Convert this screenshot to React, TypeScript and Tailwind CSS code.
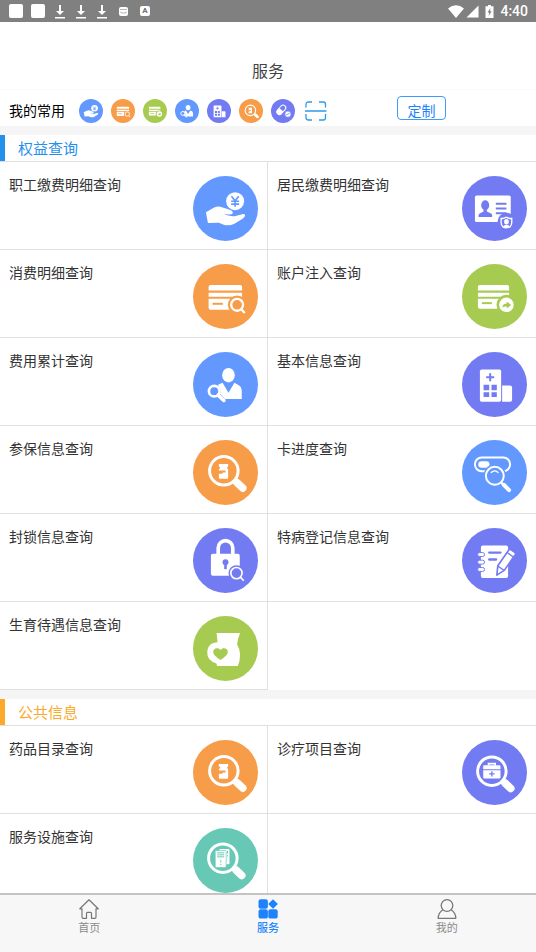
import type { ReactNode } from "react";

// ─── Types ────────────────────────────────────────────────────────────────────

type IconName =
  | "hand"
  | "cardSearch"
  | "cardShare"
  | "idCard"
  | "person"
  | "building"
  | "bottle"
  | "toggle"
  | "lock"
  | "notebook"
  | "belly"
  | "kit"
  | "files"
  | "pills";

interface ServiceItem {
  label: string;
  icon: IconName;
}

// ─── Glyphs ───────────────────────────────────────────────────────────────────

const BLUE = "#6399ff";
const ORANGE = "#f79c48";
const GREEN = "#a7cb50";
const PURPLE = "#737bf2";
const TEAL = "#67c9b5";

function Lens({ cx, cy }: { cx: number; cy: number }) {
  return (
    <g fill="none" stroke="#fff">
      <circle cx={cx} cy={cy} r="43" strokeWidth="9" />
      <path d={`M${cx + 32} ${cy + 31}l7 6`} strokeWidth="14" />
      <path
        d={`M${cx + 40} ${cy + 36}l17 16`}
        strokeWidth="23"
        strokeLinecap="round"
      />
    </g>
  );
}

const ICONS: Record<IconName, { color: string; glyph: ReactNode }> = {
  hand: {
    color: BLUE,
    glyph: (
      <>
        <circle cx="127" cy="76" r="27" />
        <path
          d="M116 61l11 14l11-14M127 75v18M115 76h24M115 85h24"
          fill="none"
          stroke={BLUE}
          strokeWidth="5"
        />
        <path d="M39 109L64 95Q76 89 87 94L111 102Q123 107 119 114Q115 118 92 114Q110 123 126 121L148 115Q160 114 156 122Q153 128 141 134L125 144Q107 152 91 146L78 141L45 142Z" />
      </>
    ),
  },
  cardSearch: {
    color: ORANGE,
    glyph: (
      <>
        <path d="M53 63h89a6 6 0 0 1 6 6v11H47V69a6 6 0 0 1 6-6zM47 87h101v12H47zM47 105h101v27a6 6 0 0 1-6 6H53a6 6 0 0 1-6-6z" />
        <path d="M59 120h31" stroke={ORANGE} strokeWidth="6" />
        <circle cx="133" cy="123" r="28" fill={ORANGE} />
        <path d="M146 136l13 13" stroke={ORANGE} strokeWidth="16" />
        <circle cx="133" cy="123" r="18" fill="none" stroke="#fff" strokeWidth="7" />
        <path d="M145 136l11 12" stroke="#fff" strokeWidth="7" />
      </>
    ),
  },
  cardShare: {
    color: GREEN,
    glyph: (
      <>
        <path d="M54 63h82a6 6 0 0 1 6 6v11H48V69a6 6 0 0 1 6-6zM48 87h94v12H48zM48 105h94v30H54a6 6 0 0 1-6-6z" />
        <path d="M60 118h30" stroke={GREEN} strokeWidth="6" />
        <circle cx="134" cy="123" r="30" fill={GREEN} />
        <circle cx="134" cy="123" r="22" />
        <path d="M122 132q0-13 13-13v-6l13 11l-13 10v-6q-8-1-13 4z" fill={GREEN} />
      </>
    ),
  },
  idCard: {
    color: PURPLE,
    glyph: (
      <>
        <rect x="39" y="59" width="108" height="80" rx="5" />
        <ellipse cx="70" cy="88" rx="12" ry="15" fill={PURPLE} />
        <path d="M65 98h10v9l14 7q3 2 2 10H50q-1-8 2-10l13-7z" fill={PURPLE} />
        <path d="M102 84h32M102 98h32M102 112h32" stroke={PURPLE} strokeWidth="6" />
        <circle cx="134" cy="138" r="27" fill={PURPLE} />
        <path
          d="M134 124q8 5 16 4v12q0 9-6 14M134 124q-8 5-16 4v12q0 9 6 14"
          fill="none"
          stroke="#fff"
          strokeWidth="4"
        />
        <ellipse cx="134" cy="138" rx="7" ry="8" />
        <path d="M122 155q3-8 12-8t12 8q-12 6-24 0z" />
      </>
    ),
  },
  person: {
    color: BLUE,
    glyph: (
      <>
        <ellipse cx="107" cy="70" rx="19" ry="22" />
        <path d="M89 93L77 98Q74 100 80 107Q86 118 81 125L97 142H147V115Q146 105 139 101L125 93L107 123Z" />
        <circle cx="64" cy="118" r="16" fill={BLUE} stroke="#fff" strokeWidth="8" />
        <path d="M76 130l17 16" stroke="#fff" strokeWidth="11" strokeLinecap="round" />
      </>
    ),
  },
  building: {
    color: PURPLE,
    glyph: (
      <>
        <rect x="54" y="53" width="64" height="97" rx="5" />
        <path d="M121 101h24a6 6 0 0 1 6 6v37a6 6 0 0 1-6 6h-24z" />
        <path d="M85 64v24M73 76h24" stroke={PURPLE} strokeWidth="6" />
        <path
          d="M65 99h17v16H65zM89 99h16v16H89zM65 121h17v15H65zM89 121h16v15H89z"
          fill={PURPLE}
        />
      </>
    ),
  },
  bottle: {
    color: ORANGE,
    glyph: (
      <>
        <Lens cx={93} cy={93} />
        <path d="M78 72h28v8l-4 3l4 6v25q0 3-3 3H81q-3 0-3-3v-12h8q4 0 4-4h8v-6H78v-4l5-5l-5-3z" />
      </>
    ),
  },
  toggle: {
    color: BLUE,
    glyph: (
      <>
        <rect
          x="39"
          y="53"
          width="106"
          height="41"
          rx="20"
          fill="none"
          stroke="#fff"
          strokeWidth="6"
        />
        <rect x="49" y="64" width="34" height="20" rx="10" />
        <circle cx="99" cy="108" r="34" fill={BLUE} />
        <circle cx="99" cy="108" r="27" fill="none" stroke="#fff" strokeWidth="6" />
        <path d="M87 99q12-12 23 0" fill="none" stroke="#fff" strokeWidth="4" />
        <path d="M118 128l8 8" stroke="#fff" strokeWidth="7" />
        <path d="M126 135l16 16" stroke="#fff" strokeWidth="12" strokeLinecap="round" />
      </>
    ),
  },
  lock: {
    color: PURPLE,
    glyph: (
      <>
        <rect x="54" y="78" width="87" height="66" rx="6" />
        <path
          d="M76 80V60a22 22 0 0 1 44 0v20"
          fill="none"
          stroke="#fff"
          strokeWidth="11"
        />
        <circle cx="98" cy="103" r="9" fill={PURPLE} />
        <path d="M98 105v19" stroke={PURPLE} strokeWidth="8" />
        <circle cx="131" cy="136" r="24" fill={PURPLE} />
        <circle cx="131" cy="136" r="17" fill="none" stroke="#fff" strokeWidth="5" />
        <path d="M143 148l10 11" stroke="#fff" strokeWidth="5" />
      </>
    ),
  },
  notebook: {
    color: PURPLE,
    glyph: (
      <>
        <rect x="57" y="53" width="82" height="98" rx="6" />
        <g stroke={PURPLE} strokeWidth="3">
          <rect x="47" y="74" width="21" height="12" rx="6" fill="#fff" />
          <rect x="47" y="97" width="21" height="12" rx="6" fill="#fff" />
          <rect x="47" y="119" width="21" height="12" rx="6" fill="#fff" />
        </g>
        <path
          d="M82 74h34M82 95h21"
          stroke={PURPLE}
          strokeWidth="7"
          strokeLinecap="round"
        />
        <path
          d="M105 142l3-28l32-46q3-5 8-2l11 7q4 3 1 8l-32 46z"
          stroke={PURPLE}
          strokeWidth="5"
          strokeLinejoin="round"
        />
        <path d="M136 74l20 14M108 115l20 13" stroke={PURPLE} strokeWidth="4" />
      </>
    ),
  },
  belly: {
    color: GREEN,
    glyph: (
      <>
        <path d="M71 51H142Q134 70 133 86Q141 98 142 116Q142 136 135 151H73Q72 149 71 143Q58 141 49 130Q42 121 43 108Q44 92 56 84Q64 79 74 79Q73 64 71 51Z" />
        <path
          d="M83 133C68 122 61 117 61 108C61 96 77 93 83 103C89 93 105 96 105 108C105 117 98 122 83 133Z"
          fill={GREEN}
        />
      </>
    ),
  },
  kit: {
    color: PURPLE,
    glyph: (
      <>
        <Lens cx={90} cy={94} />
        <path d="M80 77v-6h20v6" fill="none" stroke="#fff" strokeWidth="5" />
        <path d="M67 76h46a3 3 0 0 1 3 3v9H64v-9a3 3 0 0 1 3-3zM64 91h52v22a3 3 0 0 1-3 3H67a3 3 0 0 1-3-3z" />
        <path d="M90 94v16M82 102h16" stroke={PURPLE} strokeWidth="4" />
      </>
    ),
  },
  files: {
    color: TEAL,
    glyph: (
      <>
        <Lens cx={90} cy={91} />
        <rect x="79" y="63" width="31" height="46" rx="3" />
        <rect
          x="67"
          y="68"
          width="33"
          height="51"
          rx="3"
          stroke={TEAL}
          strokeWidth="2"
        />
        <path
          d="M73 75h21M73 81h21M73 87h21M84 97v7M84 108v4M104 69v8M104 82v4"
          stroke={TEAL}
          strokeWidth="3"
        />
      </>
    ),
  },
  pills: {
    color: PURPLE,
    glyph: (
      <>
        <g transform="rotate(-48 84 88)">
          <rect
            x="40"
            y="66"
            width="88"
            height="44"
            rx="22"
            fill="none"
            stroke="#fff"
            strokeWidth="8"
          />
          <path d="M84 66H62a22 22 0 0 0 0 44h22z" />
        </g>
        <circle cx="138" cy="124" r="25" stroke={PURPLE} strokeWidth="5" />
        <path d="M122 130l31-13" stroke={PURPLE} strokeWidth="6" />
      </>
    ),
  },
};

function ServiceIcon({ name, className = "" }: { name: IconName; className?: string }) {
  const { color, glyph } = ICONS[name];
  return (
    <svg
      viewBox="0 0 196 196"
      fill="#fff"
      className={["shrink-0", className].filter(Boolean).join(" ")}
      aria-hidden="true"
    >
      <circle cx="98" cy="98" r="98" fill={color} />
      {glyph}
    </svg>
  );
}

// ─── Data ─────────────────────────────────────────────────────────────────────

const FAVORITES: ServiceItem[] = [
  { label: "职工缴费明细查询", icon: "hand" },
  { label: "消费明细查询", icon: "cardSearch" },
  { label: "账户注入查询", icon: "cardShare" },
  { label: "费用累计查询", icon: "person" },
  { label: "基本信息查询", icon: "building" },
  { label: "参保信息查询", icon: "bottle" },
  { label: "药品", icon: "pills" },
];

const RIGHTS: ServiceItem[] = [
  { label: "职工缴费明细查询", icon: "hand" },
  { label: "居民缴费明细查询", icon: "idCard" },
  { label: "消费明细查询", icon: "cardSearch" },
  { label: "账户注入查询", icon: "cardShare" },
  { label: "费用累计查询", icon: "person" },
  { label: "基本信息查询", icon: "building" },
  { label: "参保信息查询", icon: "bottle" },
  { label: "卡进度查询", icon: "toggle" },
  { label: "封锁信息查询", icon: "lock" },
  { label: "特病登记信息查询", icon: "notebook" },
  { label: "生育待遇信息查询", icon: "belly" },
];

const PUBLIC_INFO: ServiceItem[] = [
  { label: "药品目录查询", icon: "bottle" },
  { label: "诊疗项目查询", icon: "kit" },
  { label: "服务设施查询", icon: "files" },
];

// ─── Status bar ───────────────────────────────────────────────────────────────

function DownloadIcon() {
  return (
    <svg viewBox="0 0 10 15" className="h-[15px] w-2.5" fill="#fff" aria-hidden="true">
      <path d="M4 1h2v6h3L5 11L1 7h3zM0 13h10v1.4H0z" />
    </svg>
  );
}

function StatusBar() {
  return (
    <div className="flex h-[22px] shrink-0 items-center justify-between bg-[#808080] pr-2 pl-[9px] text-white">
      <div className="flex items-center">
        <span className="size-3.5 rounded-xs bg-white" />
        <span className="ml-2 size-3.5 rounded-xs bg-white" />
        <div className="ml-2.5 flex gap-[11px]">
          <DownloadIcon />
          <DownloadIcon />
          <DownloadIcon />
        </div>
        <svg viewBox="0 0 9 10" className="ml-3 h-2.5 w-[9px]" aria-hidden="true">
          <rect y="1" width="9" height="9" rx="2" fill="#fff" />
          <path d="M1 3.5h7M2 5.5v1.5h5V5.5" fill="none" stroke="#999" strokeWidth=".7" />
        </svg>
        <span className="ml-3 flex size-2.5 items-center justify-center rounded-xs bg-white text-[8px] leading-none font-bold text-[#707070]">
          A
        </span>
      </div>
      <div className="flex items-center">
        <svg viewBox="0 0 16 13" className="h-[13px] w-4" fill="#fff" aria-hidden="true">
          <path d="M0 3.5Q8-3 16 3.5L8 13z" />
        </svg>
        <svg viewBox="0 0 13 13" className="ml-0.5 size-[13px]" fill="#fff" aria-hidden="true">
          <path d="M12.5.5v12H.5z" />
        </svg>
        <svg viewBox="0 0 9 13" className="ml-1.5 h-[13px] w-[9px]" aria-hidden="true">
          <path d="M3 0h3v1.3h2.5V13H.5V1.3H3z" fill="#fff" />
          <path d="M5.5 3L2.5 7.5h1.7L3.6 11L6.7 6.3H5z" fill="#808080" />
        </svg>
        <span className="ml-1.5 text-[14px] leading-5 font-medium">4:40</span>
      </div>
    </div>
  );
}

// ─── Sections ─────────────────────────────────────────────────────────────────

function ServiceSection({
  title,
  accent,
  items,
}: {
  title: string;
  accent: string;
  items: ServiceItem[];
}) {
  return (
    <section className="mt-[9px] bg-white">
      <div className="border-b border-[#e0e0e0]">
        <h2
          className={[
            "border-l-5 pt-0.5 pl-[13px] text-[15px] leading-6",
            accent,
          ].join(" ")}
        >
          {title}
        </h2>
      </div>
      <div className="grid grid-cols-2">
        {items.map((item) => (
          <a
            key={item.label}
            href="#"
            className="flex h-[88px] items-start justify-between border-b border-[#e0e0e0] px-[9px] pt-3.5 text-[#333] odd:border-r"
          >
            <span className="text-[14px] leading-[18px]">{item.label}</span>
            <ServiceIcon name={item.icon} className="size-[65px]" />
          </a>
        ))}
      </div>
    </section>
  );
}

// ─── Tab bar ──────────────────────────────────────────────────────────────────

function TabBar() {
  return (
    <nav className="grid h-[59px] shrink-0 grid-cols-3 border-t-2 border-[#c4c4c4] bg-[#f7f7f7] text-[11px] leading-4 text-[#8a8a8a]">
      <a href="#" className="flex flex-col items-center gap-0.5 pt-1">
        <svg
          viewBox="0 0 20 20"
          className="size-5"
          fill="none"
          stroke="#777"
          strokeWidth="1.2"
          strokeLinejoin="round"
          aria-hidden="true"
        >
          <path d="M3 9.800H.8L10 .8l9.200 9H17v8.200q0 1.300-1.300 1.300H12.500v-5q0-1-1-1h-3q-1 0-1 1v5H4.300Q3 19.300 3 18z" />
        </svg>
        首页
      </a>
      <a
        href="#"
        aria-current="page"
        className="flex flex-col items-center gap-0.5 pt-1 font-medium text-[#1e88fb]"
      >
        <svg viewBox="0 0 20 20" className="size-5" fill="#1e83fb" aria-hidden="true">
          <rect x=".5" y=".3" width="9.4" height="9.4" rx="2.2" />
          <rect x=".5" y="10.2" width="9.4" height="9.4" rx="2.2" />
          <rect x="10.3" y="10.2" width="9.4" height="9.4" rx="2.2" />
          <path
            d="M15 1.200L18.900 5L15 8.800L11.200 5z"
            stroke="#1e83fb"
            strokeWidth="1.5"
            strokeLinejoin="round"
          />
        </svg>
        服务
      </a>
      <a href="#" className="flex flex-col items-center gap-0.5 pt-1">
        <svg
          viewBox="0 0 20 20"
          className="size-5"
          fill="none"
          stroke="#777"
          strokeWidth="1.3"
          strokeLinejoin="round"
          aria-hidden="true"
        >
          <circle cx="10" cy="6.5" r="5.8" />
          <path d="M6 10.700Q1.300 13.500 1.200 19.300H18.800Q18.700 13.500 14 10.700" />
        </svg>
        我的
      </a>
    </nav>
  );
}

// ─── App ──────────────────────────────────────────────────────────────────────

export default function App() {
  return (
    <div className="flex h-screen flex-col bg-[#f5f5f5] font-[Roboto,'Noto_Sans_CJK_SC',sans-serif]">
      <StatusBar />
      <header className="shrink-0 border-b border-[#fafafa] bg-white pt-8">
        <h1 className="text-center text-[16px] leading-[35px] text-[#444]">服务</h1>
      </header>
      <div className="flex shrink-0 items-start bg-white pt-1.5 pb-[3px] pl-[9px]">
        <div className="flex items-center pt-[3px]">
          <span className="text-[14px] leading-6 text-black">我的常用</span>
          <div className="ml-3.5 flex items-center gap-2">
            {FAVORITES.map((item) => (
              <a key={item.label} href="#" aria-label={item.label}>
                <ServiceIcon name={item.icon} className="size-6" />
              </a>
            ))}
            <button type="button" aria-label="扫一扫" className="ml-0.5">
              <svg
                viewBox="0 0 22 20"
                className="h-5 w-[22px]"
                fill="none"
                stroke="#2f9be8"
                strokeWidth="1.3"
                aria-hidden="true"
              >
                <path d="M1 6.500V3.500Q1 1 3.500 1H7M14 1h4.500Q20.500 1 20.500 3.500V6.500M1 13v3.500Q1 19 3.500 19H7M14 19h4.500Q20.500 19 20.500 16.500V13M0 10h21.500" />
              </svg>
            </button>
          </div>
        </div>
        <button
          type="button"
          className="mr-[90px] ml-auto h-6 w-[49px] rounded-[4px] border border-[#3f9bfb] pt-1 text-[14px] leading-5 text-[#1e83fb]"
        >
          定制
        </button>
      </div>
      <main className="min-h-0 flex-1 overflow-y-auto [scrollbar-width:none]">
        <ServiceSection
          title="权益查询"
          accent="border-l-[#2590ea] text-[#2590ea]"
          items={RIGHTS}
        />
        <ServiceSection
          title="公共信息"
          accent="border-l-[#fbab2b] text-[#fbab2b]"
          items={PUBLIC_INFO}
        />
      </main>
      <TabBar />
    </div>
  );
}
